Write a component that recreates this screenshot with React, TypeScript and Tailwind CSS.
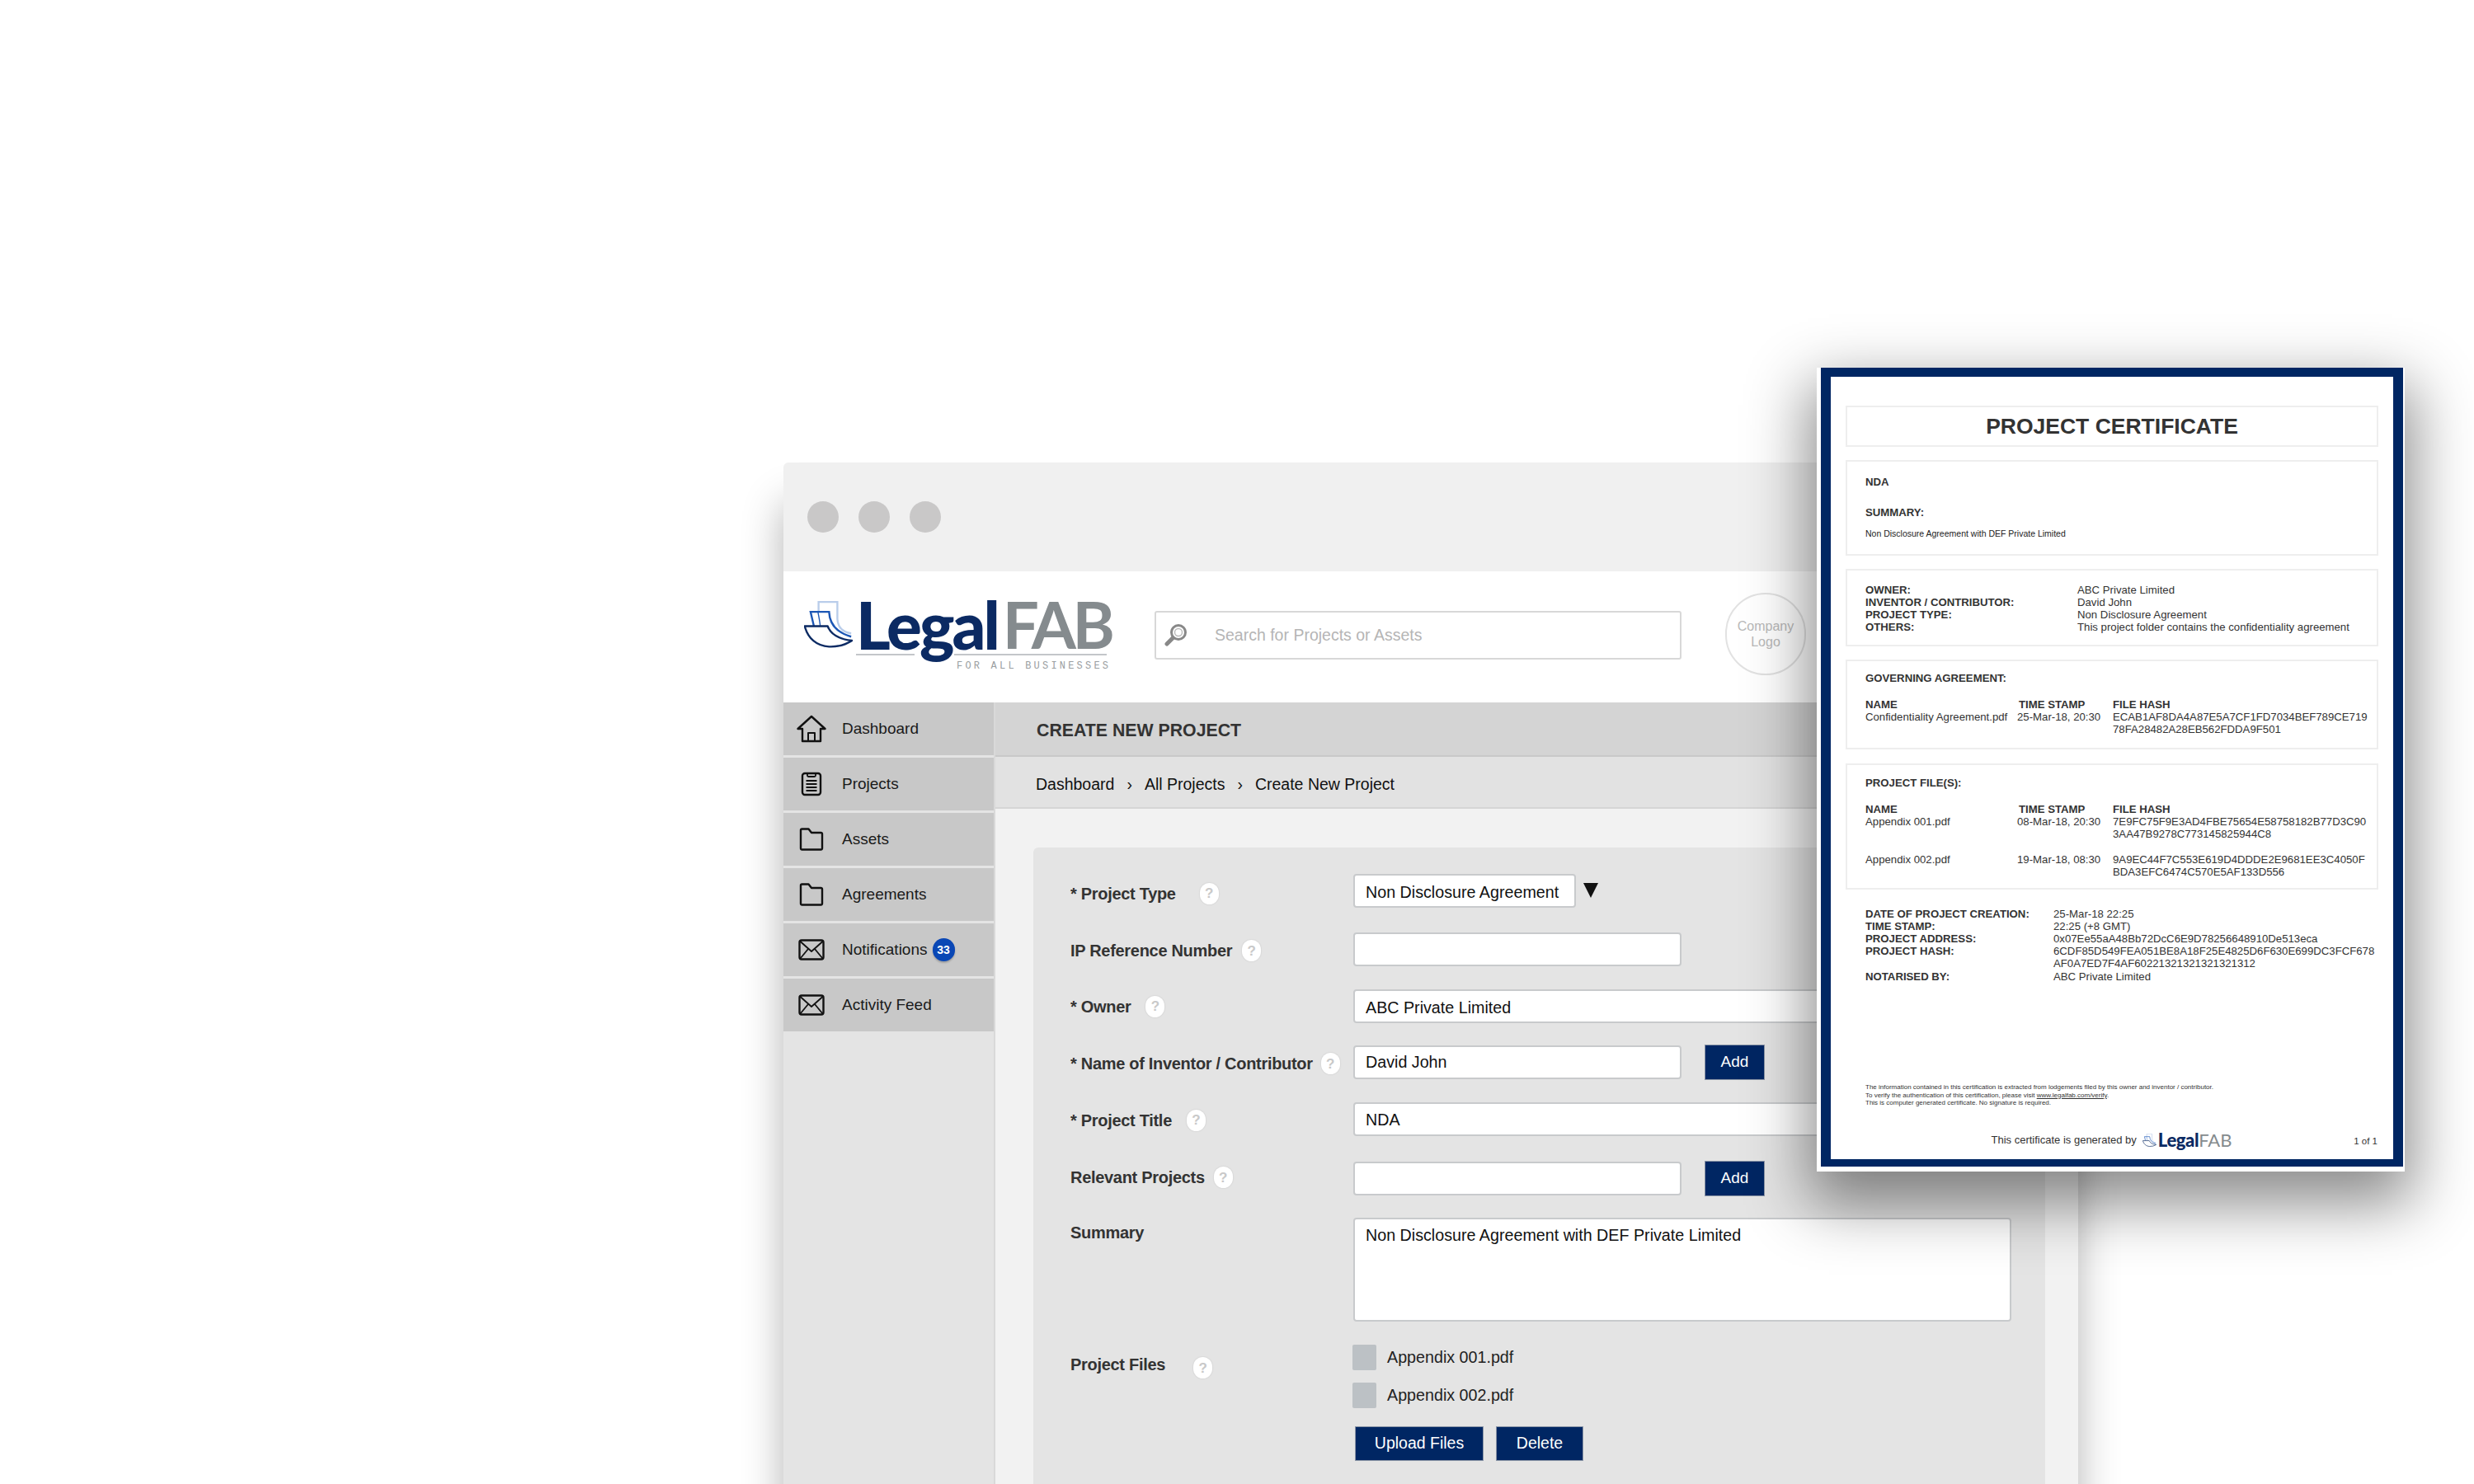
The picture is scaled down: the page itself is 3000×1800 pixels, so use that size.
import React from 'react';

const navItems = [
  { label: 'Dashboard', icon: 'home' },
  { label: 'Projects', icon: 'clipboard' },
  { label: 'Assets', icon: 'folder' },
  { label: 'Agreements', icon: 'folder' },
  { label: 'Notifications', icon: 'mail', badge: '33' },
  { label: 'Activity Feed', icon: 'mail' },
];

const NavIcon = ({ name }: { name: string }) => {
  if (name === 'home') {
    return (
      <svg width="36" height="34" viewBox="0 0 36 34" fill="none" stroke="#111" strokeWidth="2.4" strokeLinejoin="round">
        <path d="M1.5 17 18 2l16.5 15h-5.5v15H7V17z" />
        <path d="M14 32V22h8v10" strokeWidth="2" />
      </svg>
    );
  }
  if (name === 'clipboard') {
    return (
      <svg width="26" height="30" viewBox="0 0 26 30" fill="none" stroke="#111" strokeWidth="2.4">
        <rect x="2" y="2" width="22" height="26" rx="3" />
        <path d="M8 2v2.5a1.5 1.5 0 0 0 1.500 1.500h7A1.500 1.500 0 0 0 18 4.500V2" strokeWidth="1.800" />
        <path d="M6.500 11h13M6.500 15h13M6.500 19h13M6.500 23h13" strokeWidth="2" />
      </svg>
    );
  }
  if (name === 'folder') {
    return (
      <svg width="30" height="28" viewBox="0 0 30 28" fill="none" stroke="#111" strokeWidth="2.400" strokeLinejoin="round">
        <path d="M2 3a1.500 1.500 0 0 1 1.500-1.500h8L15 6h11.500A1.500 1.500 0 0 1 28 7.500V25a1.500 1.500 0 0 1-1.500 1.500h-23A1.500 1.500 0 0 1 2 25z" />
      </svg>
    );
  }
  return (
    <svg width="32" height="26" viewBox="0 0 32 26" fill="none" stroke="#111" strokeWidth="2.400" strokeLinejoin="round">
      <rect x="1.500" y="1.500" width="29" height="23" rx="2.500" />
      <path d="m2.500 3 13.500 12L29.500 3M2.500 23.500l9.500-11.500M29.500 23.500 20 12" strokeWidth="1.800" />
    </svg>
  );
};

const LogoMark = ({ className }: { className: string }) => (
  <svg viewBox="45 85 175 170" fill="none" className={className}>
    <path d="M97 125V88h68v62q3 45 50 52" stroke="#b9cdea" strokeWidth="7" />
    <path d="M80 175 68 124h67q3 68 80 90" stroke="#1c57b5" strokeWidth="7" />
    <path d="M95 126q6 30 8 48" stroke="#1c57b5" strokeWidth="4" />
    <path d="M47 176h83q16 44 88 52-38 24-83 22C90 248 58 220 47 176z" stroke="#0b2a63" strokeWidth="7" fill="#fff" strokeLinejoin="round" />
  </svg>
);

const HelpDot = ({ className }: { className: string }) => (
  <span className={`flex h-[26px] w-[23px] shrink-0 items-center justify-center rounded-full bg-white text-[17px] leading-none text-[#c9c9c9] shadow-[0_0_2px_rgba(0,0,0,0.15)] ${className}`}>
    ?
  </span>
);

const formRows = [
  { label: '* Project Type', help: 'ml-[29px]', shift: 'pt-[6px]', valueShift: 'pt-[4px]', top: 'mt-0', field: 'w-[270px]', value: 'Non Disclosure Agreement', arrow: true },
  { label: 'IP Reference Number', help: 'ml-[12px]', shift: 'pt-[3px]', valueShift: '', top: 'mt-[30px]', field: 'w-[398px]', value: '' },
  { label: '* Owner', help: 'ml-[18px]', shift: '', valueShift: 'pt-[4px]', top: 'mt-[28px]', field: 'w-[798px]', value: 'ABC Private Limited' },
  { label: '* Name of Inventor / Contributor', help: 'ml-[10px]', shift: 'pt-[3px]', valueShift: '', top: 'mt-[27px]', field: 'w-[398px]', value: 'David John', add: true },
  { label: '* Project Title', help: 'ml-[18px]', shift: 'pt-[2px]', valueShift: 'pt-[2px]', top: 'mt-[28px]', field: 'w-[798px]', value: 'NDA' },
  { label: 'Relevant Projects', help: 'ml-[11px]', shift: 'pb-[3px]', valueShift: '', top: 'mt-[31px]', field: 'w-[398px]', value: '', add: true },
];

const Cell = ({ children }: { children?: React.ReactNode }) => <div className="whitespace-nowrap">{children}</div>;

const fileRows = [
  ['Appendix 001.pdf', '08-Mar-18, 20:30', '7E9FC75F9E3AD4FBE75654E58758182B77D3C90', '3AA47B9278C773145825944C8'],
  ['Appendix 002.pdf', '19-Mar-18, 08:30', '9A9EC44F7C553E619D4DDDE2E9681EE3C4050F', 'BDA3EFC6474C570E5AF133D556'],
];

export default function App() {
  return (
    <div className="relative h-[1800px] w-[3000px] overflow-hidden bg-white pl-[950px] pt-[561px] font-['Liberation_Sans',Arial,sans-serif] text-[#222]">
      {/* app window */}
      <div className="flex h-[1300px] w-[1570px] flex-col rounded-t-md shadow-[0_50px_50px_rgba(0,0,0,0.3)]">
        <div className="flex h-[132px] items-center gap-[24px] rounded-t-md bg-[#f0f0f0] pl-[29px]">
          <span className="h-[38px] w-[38px] rounded-full bg-[#c9c8c8]" />
          <span className="h-[38px] w-[38px] rounded-full bg-[#c9c8c8]" />
          <span className="h-[38px] w-[38px] rounded-full bg-[#c9c8c8]" />
        </div>

        <div className="flex h-[159px] items-center bg-white pb-[4px] pl-[25px]">
          <div className="flex w-[425px] items-start">
            <LogoMark className="mt-[1px] h-[57px] w-[59px] shrink-0" />
            <div className="ml-[4px] flex w-[309px] flex-col">
              <div className="flex h-[58px] items-center whitespace-nowrap font-['Lato',sans-serif] text-[80px] font-black leading-none tracking-[-3px]">
                <span className="text-[#0b2a63]">Legal</span>
                <span className="ml-[6px] text-[78px] font-bold tracking-[-4.5px] text-[#858b8e]">FAB</span>
              </div>
              <div className="mt-[7px] flex">
                <span className="h-[2px] w-[71px] bg-[#c3c6c9]" />
                <span className="ml-[48px] h-[2px] w-[185px] bg-[#c3c6c9]" />
              </div>
              <div className="ml-[122px] mt-[7px] whitespace-nowrap font-['Liberation_Mono',monospace] text-[12px] leading-[12px] tracking-[3.2px] text-[#9a9ea1]">
                FOR ALL BUSINESSES
              </div>
            </div>
          </div>
          <div className="flex h-[59px] w-[639px] items-center rounded-[3px] border-2 border-[#d8d8d8] pl-[10px]">
            <svg width="28" height="30" viewBox="0 0 28 30" fill="none" className="shrink-0">
              <circle cx="17" cy="11" r="8.500" stroke="#888" strokeWidth="3" />
              <circle cx="17" cy="11" r="4.500" stroke="#bbb" strokeWidth="1.500" />
              <path d="M10 18 3 25" stroke="#888" strokeWidth="5" strokeLinecap="round" />
            </svg>
            <span className="ml-[33px] text-[19.500px] text-[#b5b5b5]">Search for Projects or Assets</span>
          </div>
          <div className="ml-[53px] mb-[4px] flex h-[100px] w-[98px] items-center justify-center rounded-full border-2 border-[#e2e2e2] text-center text-[16px] leading-[19px] text-[#b9b9b9]">
            Company
            <br />
            Logo
          </div>
        </div>

        <div className="flex flex-1">
          <aside className="flex w-[257px] shrink-0 flex-col gap-[3px] border-r-2 border-[#d9d9d9] bg-[#e4e4e4]">
            {navItems.map((item) => (
              <div key={item.label} className="flex h-[64px] items-center bg-[#c8c8c8]">
                <span className="flex w-[71px] justify-center pr-[4px]">
                  <NavIcon name={item.icon} />
                </span>
                <span className="text-[19px] text-[#1a1a1a]">{item.label}</span>
                {item.badge && (
                  <span className="ml-[6px] flex h-[28px] w-[27px] items-center justify-center rounded-full bg-[#0a47b5] text-[14px] font-bold text-white shadow-[0_2px_2px_rgba(0,0,0,0.2)]">
                    {item.badge}
                  </span>
                )}
              </div>
            ))}
          </aside>

          <main className="flex flex-1 flex-col bg-[#f2f2f2]">
            <div className="flex h-[66px] items-center border-b-2 border-[#c9c9c9] bg-[#d4d4d4] pl-[50px] pt-[6px] text-[21.300px] font-bold text-[#333]">
              CREATE NEW PROJECT
            </div>
            <div className="flex h-[63px] items-center border-b-2 border-[#d5d5d5] bg-[#e2e2e2] pl-[49px] pt-[6px] text-[19.500px] text-[#111]">
              <span>Dashboard</span>
              <span className="mx-[15px]">›</span>
              <span>All Projects</span>
              <span className="mx-[15px]">›</span>
              <span>Create New Project</span>
            </div>

            <div className="ml-[46px] mr-[40px] mt-[47px] flex-1 rounded-t-md bg-[#e4e4e4] pl-[45px] pt-[32px]">
              {formRows.map((row) => (
                <div key={row.label} className={`flex h-[41px] items-center ${row.top}`}>
                  <div className={`flex w-[343px] shrink-0 items-center text-[20px] font-bold text-[#333] ${row.shift}`}>
                    <span className="whitespace-nowrap tracking-[-0.3px]">{row.label}</span>
                    <HelpDot className={row.help} />
                  </div>
                  <div className={`flex h-[41px] items-center rounded-[4px] border-2 border-[#c8cacc] bg-white pl-[13px] text-[19.700px] text-[#111] ${row.field} ${row.valueShift}`}>
                    {row.value}
                  </div>
                  {row.arrow && (
                    <svg width="18" height="18" viewBox="0 0 18 18" className="ml-[9px] mb-[2px]">
                      <path d="M0 0h18L9 18z" fill="#111" />
                    </svg>
                  )}
                  {row.add && (
                    <span className="ml-[28px] flex h-[43px] w-[73px] items-center justify-center border border-[#8b95a6] bg-[#002663] text-[19px] font-medium text-white">
                      Add
                    </span>
                  )}
                </div>
              ))}

              <div className="mt-[27px] flex">
                <div className="w-[343px] shrink-0 pt-[3px] text-[20px] font-bold tracking-[-0.3px] text-[#333]">Summary</div>
                <div className="h-[126px] w-[798px] rounded-[4px] border-2 border-[#c8cacc] bg-white pl-[13px] pt-[5px] text-[19.700px] text-[#111]">
                  Non Disclosure Agreement with DEF Private Limited
                </div>
              </div>

              <div className="mt-[28px] flex">
                <div className="flex h-[60px] w-[343px] shrink-0 items-center pb-[12px] text-[20px] font-bold tracking-[-0.3px] text-[#333]">
                  <span>Project Files</span>
                  <HelpDot className="ml-[34px] mt-[8px]" />
                </div>
                <div className="-ml-[1px] flex flex-col">
                  <div className="flex flex-col gap-[15px]">
                    <label className="flex h-[31px] items-center text-[19.700px] text-[#222]">
                      <span className="h-[31px] w-[29px] rounded-[2px] bg-[#bcc1c5]" />
                      <span className="ml-[13px]">Appendix 001.pdf</span>
                    </label>
                    <label className="flex h-[31px] items-center text-[19.700px] text-[#222]">
                      <span className="h-[31px] w-[29px] rounded-[2px] bg-[#bcc1c5]" />
                      <span className="ml-[13px]">Appendix 002.pdf</span>
                    </label>
                  </div>
                  <div className="ml-[3px] mt-[22px] flex gap-[15px] text-[19.500px] font-medium text-white">
                    <span className="flex h-[42px] w-[156px] items-center justify-center border border-[#8b95a6] bg-[#002663]">Upload Files</span>
                    <span className="flex h-[42px] w-[106px] items-center justify-center border border-[#8b95a6] bg-[#002663]">Delete</span>
                  </div>
                </div>
              </div>
            </div>
          </main>
        </div>
      </div>

      {/* certificate sheet, lies over the window */}
      <div className="absolute left-[2203px] top-[446px] h-[975px] w-[713px] bg-white pb-[6px] pl-[5px] pr-[2px] shadow-[0_30px_70px_10px_rgba(0,0,0,0.45)]">
        <div className="flex h-full flex-col border-x-[12px] border-b-[9px] border-t-[11px] border-[#002663] bg-white px-[18px] pt-[35px] text-[13.200px] leading-[15px] text-[#333]">
          <div className="flex h-[50px] items-center justify-center border-2 border-[#eeeeee] text-[26.500px] font-bold text-[#333]">
            PROJECT CERTIFICATE
          </div>

          <div className="mt-[16px] h-[116px] border-2 border-[#eeeeee] pl-[22px] pt-[17px]">
            <div className="font-bold">NDA</div>
            <div className="mt-[22px] font-bold">SUMMARY:</div>
            <div className="mt-[11px] text-[10.500px] text-[#222]">Non Disclosure Agreement with DEF Private Limited</div>
          </div>

          <div className="mt-[16px] grid h-[94px] grid-cols-[257px_1fr] content-start border-2 border-[#eeeeee] pl-[22px] pt-[16px]">
            <div className="font-bold">OWNER:</div>
            <div>ABC Private Limited</div>
            <div className="font-bold">INVENTOR / CONTRIBUTOR:</div>
            <div>David John</div>
            <div className="font-bold">PROJECT TYPE:</div>
            <div>Non Disclosure Agreement</div>
            <div className="font-bold">OTHERS:</div>
            <div>This project folder contains the confidentiality agreement</div>
          </div>

          <div className="mt-[16px] h-[109px] border-2 border-[#eeeeee] pl-[22px] pt-[13px]">
            <div className="font-bold">GOVERNING AGREEMENT:</div>
            <div className="mt-[17px] grid grid-cols-[184px_116px_1fr]">
              <div className="font-bold">NAME</div>
              <div className="pl-[2px] font-bold">TIME STAMP</div>
              <div className="font-bold">FILE HASH</div>
              <Cell>Confidentiality Agreement.pdf</Cell>
              <Cell>25-Mar-18, 20:30</Cell>
              <Cell>ECAB1AF8DA4A87E5A7CF1FD7034BEF789CE719</Cell>
              <Cell />
              <Cell />
              <Cell>78FA28482A28EB562FDDA9F501</Cell>
            </div>
          </div>

          <div className="mt-[17px] h-[153px] border-2 border-[#eeeeee] pl-[22px] pt-[14px]">
            <div className="font-bold">PROJECT FILE(S):</div>
            <div className="mt-[17px] grid grid-cols-[184px_116px_1fr]">
              <div className="font-bold">NAME</div>
              <div className="pl-[2px] font-bold">TIME STAMP</div>
              <div className="font-bold">FILE HASH</div>
              {fileRows.map((file, i) => (
                <React.Fragment key={file[0]}>
                  <div className={i > 0 ? 'mt-[16px]' : ''}>{file[0]}</div>
                  <div className={`whitespace-nowrap ${i > 0 ? 'mt-[16px]' : ''}`}>{file[1]}</div>
                  <div className={`whitespace-nowrap ${i > 0 ? 'mt-[16px]' : ''}`}>{file[2]}</div>
                  <Cell />
                  <Cell />
                  <Cell>{file[3]}</Cell>
                </React.Fragment>
              ))}
            </div>
          </div>

          <div className="mt-[22px] grid grid-cols-[228px_1fr] pl-[24px]">
            <div className="font-bold">DATE OF PROJECT CREATION:</div>
            <div>25-Mar-18 22:25</div>
            <div className="font-bold">TIME STAMP:</div>
            <div>22:25 (+8 GMT)</div>
            <div className="font-bold">PROJECT ADDRESS:</div>
            <div>0x07Ee55aA48Bb72DcC6E9D78256648910De513eca</div>
            <div className="font-bold">PROJECT HASH:</div>
            <div className="whitespace-nowrap">6CDF85D549FEA051BE8A18F25E4825D6F630E699DC3FCF678</div>
            <div />
            <div>AF0A7ED7F4AF60221321321321321312</div>
            <div className="mt-[1px] font-bold">NOTARISED BY:</div>
            <div className="mt-[1px]">ABC Private Limited</div>
          </div>

          <div className="mt-[122px] pl-[24px] text-[8px] leading-[9.500px] text-[#333]">
            <div>The information contained in this certification is extracted from lodgements filed by this owner and inventor / contributor.</div>
            <div>
              To verify the authentication of this certification, please visit <span className="underline">www.legalfab.com/verify</span>.
            </div>
            <div>This is computer generated certificate. No signature is required.</div>
          </div>

          <div className="relative mt-[29px] flex items-center justify-center pr-[1px]">
            <span className="text-[13px] text-[#333]">This certificate is generated by</span>
            <LogoMark className="ml-[7px] h-[16px] w-[17px]" />
            <span className="ml-[2px] whitespace-nowrap font-['Lato',sans-serif] text-[22px] leading-[22px]">
              <span className="font-black tracking-[-0.4px] text-[#0b2a63]">Legal</span>
              <span className="font-normal text-[#858b8e]">FAB</span>
            </span>
            <span className="absolute right-[1px] top-[5px] text-[11.500px] text-[#333]">1 of 1</span>
          </div>
        </div>
      </div>
    </div>
  );
}
